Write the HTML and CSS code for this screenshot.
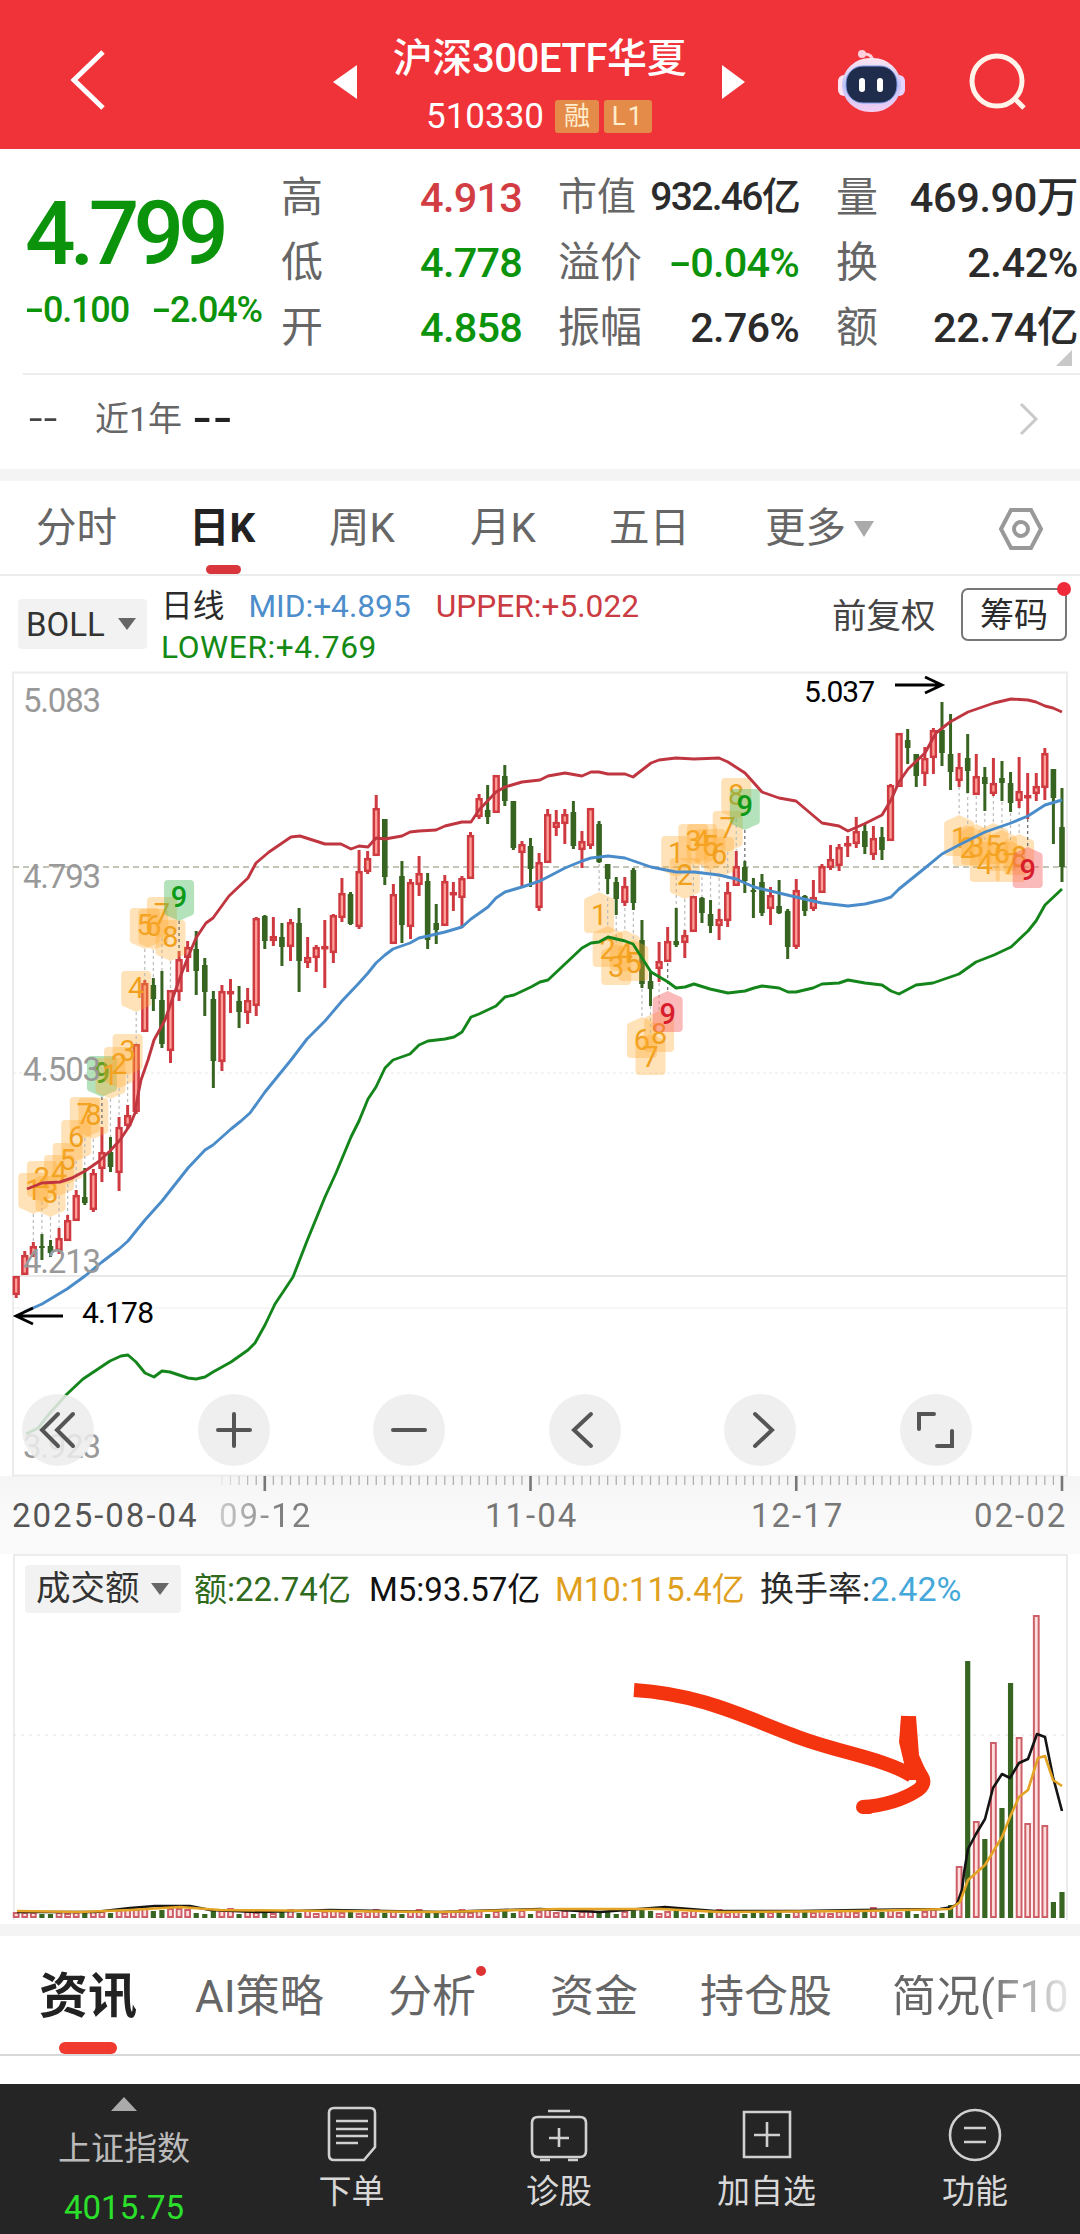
FILE: index.html
```html
<!DOCTYPE html>
<html lang="zh-CN">
<head>
  <meta charset="UTF-8">
  <meta name="viewport" content="width=device-width, initial-scale=1.0">
  <title>沪深300ETF华夏</title>
  <link rel="stylesheet" href="styles.css">
</head>
<body>
  <!-- Header -->
  <header class="header">
    <svg class="back" width="40" height="64" viewBox="0 0 40 64"><path d="M34 4 L5 32 L34 60"/></svg>
    <svg class="prev" width="26" height="36" viewBox="0 0 26 36"><path d="M25 1 V35 L1 18 Z"/></svg>
    <div class="title">
      <h1>沪深300ETF华夏</h1>
      <div class="code">
        <span class="code-num">510330</span>
        <span class="tag">融</span>
        <span class="tag tag-l1">L1</span>
      </div>
    </div>
    <svg class="next" width="26" height="36" viewBox="0 0 26 36"><path d="M1 1 V35 L24 18 Z"/></svg>
    <svg class="robot" width="70" height="66" viewBox="0 0 70 66">
      <defs>
        <linearGradient id="shell" x1="0" y1="0" x2="0" y2="1"><stop offset="0" stop-color="#ffe6f0"/><stop offset="0.5" stop-color="#c3c5f8"/><stop offset="1" stop-color="#f3cdf2"/></linearGradient>
      </defs>
      <path d="M36 14 Q35 6 25 7" fill="none" stroke="#ffd0dc" stroke-width="3"/>
      <circle cx="25" cy="7" r="4" fill="#ffd0dc"/>
      <rect x="1" y="28" width="12" height="21" rx="6" fill="#ffe3f1"/>
      <rect x="56" y="28" width="12" height="21" rx="6" fill="#e5d4ff"/>
      <rect x="5" y="11" width="59" height="54" rx="28" fill="url(#shell)"/>
      <rect x="9" y="19" width="51" height="37" rx="17" fill="#202c4b" stroke="#7d9bea" stroke-width="1"/>
      <rect x="22" y="31" width="6" height="14" rx="3" fill="#fff"/>
      <rect x="40" y="31" width="6" height="14" rx="3" fill="#fff"/>
    </svg>
    <svg class="search" width="60" height="60" viewBox="0 0 60 60"><circle cx="28" cy="29" r="25"/><path d="M45 46 L55 56"/></svg>
  </header>

  <!-- Quote -->
  <section class="quote">
    <div class="price down">
      <div class="last">4.799</div>
      <div class="change"><span><span class="minus">-</span>0.100</span><span><span class="minus">-</span>2.04%</span></div>
    </div>
    <dl class="col col-1">
      <dt>高</dt><dd class="up">4.913</dd>
      <dt>低</dt><dd class="down">4.778</dd>
      <dt>开</dt><dd class="down">4.858</dd>
    </dl>
    <dl class="col col-2">
      <dt class="narrow">市值</dt><dd class="narrow">932.46亿</dd>
      <dt>溢价</dt><dd class="down"><span class="minus">-</span>0.04%</dd>
      <dt>振幅</dt><dd>2.76%</dd>
    </dl>
    <dl class="col col-3">
      <dt>量</dt><dd>469.90万</dd>
      <dt>换</dt><dd>2.42%</dd>
      <dt>额</dt><dd>22.74亿</dd>
    </dl>
    <i class="corner"></i>
  </section>

  <section class="year">
    <span class="dash">--</span>
    <span class="year-label">近1年</span>
    <span class="dash dash-b">--</span>
    <svg width="20" height="34" viewBox="0 0 20 34"><path d="M2 2 L17 17 L2 32"/></svg>
  </section>

  <!-- Period tabs -->
  <nav class="periods">
    <span>分时</span>
    <span class="active">日K</span>
    <span>周K</span>
    <span>月K</span>
    <span>五日</span>
    <span class="more">更多<svg width="20" height="18" viewBox="0 0 20 18"><path d="M0 1 H20 L10 17 Z"/></svg></span>
    <svg class="settings" width="48" height="44" viewBox="0 0 48 44"><path d="M14 3 H34 L44 22 L34 41 H14 L4 22 Z"/><circle cx="24" cy="22" r="7"/></svg>
  </nav>

  <!-- Indicator row -->
  <section class="indicator">
    <div class="select">BOLL<i class="caret"></i></div>
    <div class="boll">
      <div><span class="day">日线</span><span class="mid">MID:+4.895</span><span class="upper">UPPER:+5.022</span></div>
      <div class="lower">LOWER:+4.769</div>
    </div>
    <span class="adjust">前复权</span>
    <span class="chips">筹码<i class="dot"></i></span>
  </section>

  <!-- Candle chart -->
  <section class="kline">
    <svg id="kline" width="1080" height="832" viewBox="0 660 1080 832"></svg>
    <div class="controls">
      <button><svg viewBox="0 0 72 72"><path d="M36 20 L20 36 L36 52 M51 20 L35 36 L51 52"/></svg></button>
      <button><svg viewBox="0 0 72 72"><path d="M36 20 V52 M20 36 H52"/></svg></button>
      <button><svg viewBox="0 0 72 72"><path d="M20 36 H52"/></svg></button>
      <button><svg viewBox="0 0 72 72"><path d="M42 20 L25 36 L42 52"/></svg></button>
      <button><svg viewBox="0 0 72 72"><path d="M31 20 L48 36 L31 52"/></svg></button>
      <button><svg viewBox="0 0 72 72"><path d="M34 20 H19 V35 M52 37 V52 H37"/></svg></button>
    </div>
    <div class="dates">
      <span class="first">2025-08-04</span>
      <span class="faded">09-12</span>
      <span>11-04</span>
      <span>12-17</span>
      <span>02-02</span>
    </div>
  </section>

  <!-- Turnover chart -->
  <section class="turnover">
    <div class="turnover-head">
      <div class="select">成交额<i class="caret"></i></div>
      <span class="amount">额:22.74亿</span>
      <span class="m5">M5:93.57亿</span>
      <span class="m10">M10:115.4亿</span>
      <span class="rate">换手率:<b>2.42%</b></span>
    </div>
    <svg id="volume" width="1080" height="306" viewBox="0 1614 1080 306"></svg>
  </section>

  <!-- Info tabs -->
  <nav class="info">
    <span class="active">资讯</span>
    <span>AI策略</span>
    <span>分析<i class="dot"></i></span>
    <span>资金</span>
    <span>持仓股</span>
    <span class="fade">简况(F10</span>
  </nav>

  <!-- Bottom bar -->
  <footer class="bottom">
    <div class="index">
      <i class="tri"></i>
      <span>上证指数</span>
      <b>4015.75</b>
    </div>
    <div class="item">
      <svg width="60" height="60" viewBox="0 0 60 60"><path d="M12 4 H48 Q53 4 53 9 V43 L42 56 H12 Q7 56 7 51 V9 Q7 4 12 4 Z M14 17 H46 M14 25 H46 M14 32 H46 M14 39 H36"/></svg>
      <span>下单</span>
    </div>
    <div class="item">
      <svg width="60" height="60" viewBox="0 0 60 60"><path d="M9 13 H51 Q57 13 57 19 V47 Q57 53 51 53 H9 Q3 53 3 47 V19 Q3 13 9 13 Z M19 7 H41 M11 56 H21 M39 56 H49 M30 24 V43 M20 34 H40"/></svg>
      <span>诊股</span>
    </div>
    <div class="item">
      <svg width="60" height="60" viewBox="0 0 60 60"><path d="M7 8 H53 V53 H7 Z M30 18 V43 M17 31 H43"/></svg>
      <span>加自选</span>
    </div>
    <div class="item">
      <svg width="60" height="60" viewBox="0 0 60 60"><circle cx="30" cy="31" r="25"/><path d="M19 24 H41 M19 38 H41"/></svg>
      <span>功能</span>
    </div>
  </footer>

  <script src="script.js"></script>
</body>
</html>
```
FILE: styles.css
```css
:root {
  --red: #f03239;
  --up: #d23c43;
  --down: #0b930b;
  --gray: #666;
  --line: #ececec;
}

* {
  box-sizing: border-box;
}

body {
  margin: 0;
  width: 1080px;
  height: 2234px;
  overflow: hidden;
  background: #fff;
  color: #2b2b2b;
  font-family: Roboto, "Noto Sans CJK SC", sans-serif;
  line-height: 1;
  white-space: nowrap;
}

i {
  display: block;
}

/* Header */
.header {
  display: flex;
  align-items: flex-start;
  height: 149px;
  background: var(--red);
  color: #fff;
}

.header path,
.header circle {
  fill: none;
}

.back {
  margin: 48px 0 0 69px;
  stroke: #fff;
  stroke-width: 5;
}

.header .prev path,
.header .next path {
  fill: #fff;
}

.prev {
  margin: 64px 0 0 223px;
}

.title {
  width: 363px;
  text-align: center;
}

.title h1 {
  margin: 39px 0 0;
  font-size: 40px;
  line-height: 40px;
  font-weight: 500;
  letter-spacing: -0.4px;
}

.code {
  display: flex;
  align-items: center;
  margin: 17px 0 0 68px;
  height: 40px;
  gap: 5px;
}

.code-num {
  width: 124px;
  text-align: left;
  font-size: 35px;
}

.tag {
  width: 44px;
  height: 33px;
  line-height: 33px;
  border-radius: 3px;
  background: #e58b49;
  color: #ffeccb;
  font-size: 26px;
}

.tag-l1 {
  width: 48px;
  letter-spacing: 2px;
}

.next {
  margin: 64px 0 0 0;
}

.robot {
  margin: 47px 0 0 90px;
}

.header .robot circle {
  fill: #ffd0dc;
}

.search {
  margin: 52px 0 0 62px;
  stroke: #fff3ea;
  stroke-width: 5;
}

/* Quote */
.quote {
  position: relative;
  display: flex;
  height: 226px;
}

.quote::after {
  content: "";
  position: absolute;
  left: 23px;
  right: 0;
  bottom: 0;
  height: 2px;
  background: var(--line);
}

.price {
  width: 281px;
  padding: 40px 0 0 25px;
}

.up {
  color: var(--up);
}

.down {
  color: var(--down);
}

.minus {
  display: inline-block;
  margin-right: 4px;
  transform: scaleX(1.6);
}

.last {
  font-size: 89px;
  font-weight: 500;
  letter-spacing: -5.8px;
}

.change {
  display: flex;
  gap: 26px;
  margin-top: 14px;
  padding-left: 3px;
  font-size: 36px;
  font-weight: 500;
  letter-spacing: -1.2px;
}

.col {
  display: grid;
  grid-template-columns: auto auto;
  grid-template-rows: repeat(3, 65px);
  align-items: center;
  justify-content: space-between;
  margin: 16px 0 0;
}

.col dt {
  color: var(--gray);
  font-size: 42px;
}

.col dd {
  margin: 0;
  font-size: 41.5px;
  font-weight: 500;
  letter-spacing: -0.8px;
  text-align: right;
}

.col dt.narrow {
  font-size: 39px;
}

.col dd.narrow {
  font-size: 39px;
  letter-spacing: -1.7px;
}

.col-1 {
  width: 241px;
}

.col-2 {
  width: 241px;
  margin-left: 36px;
}

.col-3 {
  width: 242px;
  margin-left: 37px;
}

.col-3 dd {
  letter-spacing: -0.4px;
}

.corner {
  position: absolute;
  right: 8px;
  bottom: 9px;
  border-left: 16px solid transparent;
  border-bottom: 16px solid #c8c8c8;
}

.year {
  display: flex;
  align-items: center;
  height: 106px;
  padding: 0 41px 6px 29px;
  border-bottom: 12px solid #f4f4f4;
  font-size: 32px;
  color: var(--gray);
}

.dash {
  width: 31px;
  font-size: 36px;
  letter-spacing: 1px;
  color: #444;
  transform: scaleX(1.35);
  transform-origin: left;
}

.year-label {
  margin: 0 10px 0 35px;
  font-size: 34px;
}

.dash-b {
  color: #222;
  font-weight: 700;
  letter-spacing: 0;
  transform: scaleX(1.45);
}

.year svg {
  margin-left: auto;
  fill: none;
  stroke: #c9c9c9;
  stroke-width: 3;
}

/* Period tabs */
.periods {
  display: grid;
  grid-template-columns: 153px 140px 141px 139px 156px 232px 48px;
  align-items: center;
  height: 95px;
  padding: 2px 0 0 36px;
  border-bottom: 2px solid var(--line);
  color: var(--gray);
  font-size: 40.5px;
}

.periods .active {
  position: relative;
  color: #222;
  font-weight: 700;
}

.periods .active::after {
  content: "";
  position: absolute;
  left: 17px;
  top: 57px;
  width: 35px;
  height: 9px;
  border-radius: 5px;
  background: #d8363c;
}

.more {
  display: flex;
  align-items: center;
  gap: 8px;
}

.more svg {
  fill: #aaa;
}

.settings {
  fill: none;
  stroke: #999;
  stroke-width: 4;
}

/* Indicator row */
.indicator {
  display: flex;
  height: 84px;
  padding: 10px 12px 0 18px;
}

.select {
  display: flex;
  align-items: center;
  justify-content: space-between;
  width: 129px;
  height: 50px;
  margin-top: 13px;
  padding: 0 11px 0 8px;
  border-radius: 4px;
  background: #f2f2f2;
  color: #333;
  font-size: 33px;
}

.caret {
  border: 9px solid transparent;
  border-top: 12px solid #666;
  border-bottom: 0;
}

.boll {
  width: 670px;
  padding-left: 14px;
  font-size: 31.7px;
  line-height: 41px;
}

.boll .mid {
  margin: 0 25px 0 24px;
  color: #4d8dcb;
}

.boll .upper {
  color: #cb3b42;
}

.boll .lower {
  color: #148a14;
  letter-spacing: 0.6px;
}

.adjust {
  width: 144px;
  margin-top: 3px;
  padding-left: 15px;
  font-size: 34.5px;
  line-height: 54px;
  color: #444;
}

.chips {
  position: relative;
  width: 106px;
  height: 53px;
  margin-top: 2px;
  border: 2px solid #777;
  border-radius: 7px;
  font-size: 34px;
  line-height: 50px;
  text-align: center;
}

.chips .dot {
  position: absolute;
  top: -8px;
  right: -6px;
  width: 14px;
  height: 14px;
  border-radius: 50%;
  background: #ef2b3b;
}

/* Candle chart */
.kline {
  position: relative;
  height: 894px;
  background: linear-gradient(#fff 816px, #f5f5f5 816px, #f9f9f9 850px, #fafafa);
}

.kline > svg,
.turnover > svg {
  display: block;
}

#kline text {
  font-size: 33px;
}

.controls {
  position: absolute;
  left: 22px;
  top: 734px;
  display: flex;
  gap: 103.6px;
}

.controls button {
  width: 72px;
  height: 72px;
  padding: 0;
  border: 0;
  border-radius: 50%;
  background: rgba(236, 236, 236, 0.86);
}

.controls svg {
  display: block;
  fill: none;
  stroke: #555;
  stroke-width: 4;
  stroke-linecap: round;
}

.dates {
  display: grid;
  grid-template-columns: 207px 266px 266px 223px auto;
  padding: 7px 0 0 12px;
  font-size: 33px;
  letter-spacing: 2px;
  color: #777;
}

.dates .first {
  color: #555;
}

.dates .faded {
  color: transparent;
  background: linear-gradient(90deg, #ccc, #808080 60px);
  background-clip: text;
}

/* Turnover chart */
.turnover {
  height: 370px;
}

.turnover-head {
  display: flex;
  align-items: center;
  height: 60px;
  margin: 0 12px 0 13px;
  padding-left: 10px;
  border: 2px solid var(--line);
  border-bottom: 0;
  font-size: 33px;
}

.turnover-head .select {
  width: 156px;
  height: 48px;
  margin: 7px 13px 0 0;
  padding: 0 12px 0 11px;
  font-size: 34.5px;
}

.turnover-head span {
  margin-top: 8px;
}

.amount {
  width: 175px;
  color: #2f6a1d;
}

.m5 {
  width: 186px;
  color: #111;
}

.m10 {
  width: 205px;
  color: #dfa01e;
}

.rate {
  font-size: 34px;
}

.rate b {
  font-weight: 400;
  color: #45a8da;
}

/* Info tabs */
.info {
  display: grid;
  grid-template-columns: 156px 193px 162px 150px 192px auto;
  align-items: center;
  height: 132px;
  padding: 3px 0 0 39px;
  border-top: 12px solid #f4f4f4;
  border-bottom: 2px solid #d8d8d8;
  color: var(--gray);
  font-size: 44px;
}

.info span {
  position: relative;
}

.info .active {
  color: #222;
  font-size: 49px;
  font-weight: 700;
}

.info .active::after {
  content: "";
  position: absolute;
  left: 20px;
  top: 70px;
  width: 58px;
  height: 12px;
  border-radius: 6px;
  background: #f0392f;
}

.info .dot {
  position: absolute;
  left: 88px;
  top: -9px;
  width: 10px;
  height: 10px;
  border-radius: 50%;
  background: #d33;
}

.info .fade {
  width: 190px;
  color: transparent;
  background: linear-gradient(90deg, #666 90px, #eee 180px);
  background-clip: text;
}

/* Bottom bar */
.bottom {
  display: grid;
  grid-template-columns: 248px 207px 208px 207px 210px;
  height: 150px;
  margin-top: 28px;
  background: #252525;
  color: #d8d8d8;
}

.index,
.item {
  display: flex;
  flex-direction: column;
  align-items: center;
  font-size: 33px;
}

.tri {
  margin: 13px 0 21px;
  border: 13px solid transparent;
  border-bottom: 14px solid #aaa;
  border-top: 0;
}

.index span {
  color: #bbb;
}

.index b {
  margin-top: 26px;
  font-size: 33px;
  font-weight: 400;
  color: #2be02b;
}

.item {
  padding-top: 20px;
}

.item svg {
  fill: none;
  stroke: #d0d0d0;
  stroke-width: 2.6;
}

.item span {
  margin-top: 11px;
}
```
FILE: script.js
```js
// [direction, high, body top, body bottom, low]
const candles = [
  ['r',1276,1276,1295,1298],['r',1251,1255,1275,1275],['r',1242,1246,1255,1257],['g',1234,1246,1247,1260],['g',1240,1246,1253,1257],
  ['r',1228,1238,1251,1254],['r',1215,1220,1241,1241],['r',1190,1195,1221,1221],['g',1168,1197,1203,1205],['r',1169,1173,1210,1212],
  ['r',1127,1152,1169,1182],['g',1137,1152,1167,1172],['r',1117,1127,1173,1191],['r',1105,1115,1126,1129],['r',1044,1044,1112,1114],
  ['r',980,983,1032,1032],['g',978,985,999,1011],['g',971,1000,1044,1048],['r',990,990,1051,1063],['r',951,959,992,1001],
  ['r',941,947,958,972],['g',931,949,971,995],['g',958,965,992,1016],['g',991,999,1061,1088],['r',985,991,1062,1071],
  ['r',979,991,992,1013],['g',986,1001,1012,1028],['r',988,1000,1013,1024],['r',917,918,1006,1016],['g',915,916,941,949],
  ['r',917,936,941,946],['g',923,937,947,966],['r',919,922,947,961],['g',908,923,961,992],['r',937,957,963,968],
  ['r',945,947,958,972],['r',920,946,947,988],['r',914,915,953,963],['r',878,893,918,922],['g',892,894,924,925],
  ['r',850,871,927,929],['r',851,858,872,874],['r',795,808,856,856],['g',819,819,877,885],['r',884,894,944,944],
  ['g',861,876,925,943],['r',879,882,927,939],['r',856,873,885,896],['g',873,881,940,949],['g',904,923,930,944],
  ['r',875,881,926,926],['r',882,892,893,911],['r',876,878,898,928],['r',832,835,879,879],['r',794,798,817,819],
  ['g',785,810,817,824],['r',775,775,813,813],['g',765,776,801,806],['g',801,801,848,850],['r',841,844,853,886],
  ['g',838,846,869,887],['r',853,862,908,911],['r',809,814,863,863],['r',810,822,828,836],['r',809,814,824,844],
  ['g',801,812,846,849],['r',831,841,850,868],['r',808,808,846,849],['g',821,824,862,863],['g',864,864,879,894],
  ['g',877,882,899,915],['r',877,886,903,906],['g',868,870,903,910],['g',920,940,984,988],['g',972,981,989,1006],
  ['r',942,961,969,982],['r',927,941,962,962],['g',908,941,945,947],['r',930,935,943,958],['r',896,896,932,932],
  ['g',897,898,913,923],['g',900,914,926,933],['r',909,919,926,940],['r',882,892,921,927],['r',851,866,886,886],
  ['g',861,867,881,893],['g',878,890,891,918],['g',874,882,913,916],['r',887,895,909,925],['g',880,906,913,914],
  ['g',909,911,947,959],['r',879,890,947,949],['g',895,896,911,916],['r',880,897,909,911],['r',864,866,893,893],
  ['r',845,859,868,870],['r',844,847,866,871],['r',836,843,844,857],['r',817,831,844,848],['g',823,831,847,854],
  ['r',826,838,855,860],['g',827,837,850,860],['r',784,785,841,841],['r',733,733,787,787],['g',729,740,748,764],
  ['g',754,754,776,787],['r',747,758,774,786],['r',728,730,758,774],['g',702,730,753,766],['g',714,754,772,790],
  ['r',753,767,781,787],['g',734,758,771,793],['r',754,776,795,795],['g',767,777,784,811],['r',758,783,794,796],
  ['g',761,778,783,801],['g',772,783,803,812],['r',757,791,801,808],['r',773,795,797,819],['r',773,786,794,801],
  ['r',748,753,788,800],['g',769,769,798,844],['g',788,827,867,882]
];

const upper = '27,1189 42,1183 60,1182 72,1178 85,1171 98,1162 110,1151 120,1140 130,1125 135,1113 137,1100 141,1080 148,1060 154,1040 165,1020 172,1000 181,975 188,957 196,938 206,923 213,918 229,896 248,878 256,863 269,852 291,837 300,836 325,844 341,844 351,849 359,846 368,847 376,838 385,839 402,836 410,832 419,831 436,830 445,826 462,822 471,822 479,810 496,792 505,787 522,782 540,780 548,776 565,773 582,776 591,772 599,772 608,774 625,774 633,777 651,763 659,760 676,758 694,759 719,758 728,762 745,773 754,783 762,792 779,798 796,801 822,823 839,826 848,831 864,824 882,815 891,800 899,782 908,769 925,753 936,733 950,722 968,712 994,703 1011,699 1028,700 1036,702 1045,706 1053,708 1062,712';
const mid = '24,1312 42,1304 67,1289 85,1276 102,1262 119,1249 128,1241 136,1231 145,1220 162,1201 188,1168 205,1150 213,1145 231,1129 241,1121 250,1113 265,1092 291,1060 307,1039 325,1021 342,1001 359,983 368,973 376,963 385,955 393,949 410,943 419,938 428,936 445,932 462,927 471,919 488,907 496,898 505,892 522,887 540,881 565,868 582,861 591,858 608,856 625,858 651,867 676,872 694,872 719,875 736,879 754,887 779,893 804,899 822,903 848,906 865,904 882,900 891,897 899,889 925,868 942,854 959,845 985,832 1011,823 1028,816 1045,805 1062,800';
const lower = '26,1434 38,1428 50,1413 67,1394 83,1379 110,1361 121,1356 128,1355 136,1362 145,1373 154,1377 162,1371 170,1372 188,1378 196,1379 205,1377 213,1372 231,1362 248,1350 255,1343 265,1325 275,1304 293,1277 307,1241 325,1197 336,1173 351,1137 359,1121 368,1099 376,1087 385,1068 393,1060 410,1054 419,1045 428,1041 445,1039 454,1037 462,1032 471,1017 479,1014 496,1006 505,997 514,995 531,987 540,982 548,980 565,964 582,948 591,943 599,942 608,937 625,941 633,944 642,958 651,972 668,982 676,988 685,987 694,984 710,989 728,993 745,991 754,988 762,986 779,988 788,992 796,992 813,988 822,984 839,983 848,980 865,983 882,985 891,991 899,994 916,985 933,983 959,974 976,962 994,955 1011,947 1028,931 1036,921 1045,905 1062,889';

// TD sequence: [first candle, side, centre of each badge 1..9]
const sequences = [
  [2, 'top', [1190,1178,1193,1172,1160,1137,1114,1115,1073]],
  [11, 'top', [1075,1064,1051,988,925,926,914,937,897]],
  [68, 'bottom', [915,949,967,953,963,1040,1057,1034,1014]],
  [77, 'top', [853,875,841,841,846,854,828,795,806]],
  [110, 'bottom', [838,848,847,864,846,853,864,857,870]]
];

const x = i => 16.2 + i * 8.572;
const line = (x1, y1, x2, y2, color, width = 1, extra = '') =>
  `<line x1="${x1}" y1="${y1}" x2="${x2}" y2="${y2}" stroke="${color}" stroke-width="${width}" ${extra}/>`;
const poly = (points, color, width = 2.9) =>
  `<polyline points="${points}" fill="none" stroke="${color}" stroke-width="${width}" stroke-linejoin="round"/>`;
const label = (text, tx, ty, w, color, size = 33) =>
  `<text x="${tx}" y="${ty}" textLength="${w}" fill="${color}" style="font-size:${size}px">${text}</text>`;

function drawKline() {
  let s = '<rect x="13" y="672.5" width="1054" height="803" fill="none" stroke="#ececec" stroke-width="2"/>';
  s += line(13, 1073, 1067, 1073, '#e8e8e8', 1, 'stroke-dasharray="3 3"');
  s += line(13, 1276, 1067, 1276, '#e2e2e2', 1.5);
  s += line(13, 1308, 1067, 1308, '#eee', 1);
  s += line(13, 867, 1067, 867, '#b0b3a0', 1.3, 'stroke-dasharray="6 4"');

  candles.forEach(([dir, hi, top, bot, lo], i) => {
    const c = dir === 'r' ? '#cf3a41' : '#376420';
    s += line(x(i), hi, x(i), dir === 'r' ? top : bot, c, 3);
    s += line(x(i), dir === 'r' ? bot : top, x(i), lo, c, 3);
    s += dir === 'r'
      ? `<rect x="${x(i) - 2.4}" y="${top + 1.2}" width="4.8" height="${Math.max(bot - top - 2.4, 1)}" fill="#ff9f97" stroke="${c}" stroke-width="2.5"/>`
      : `<rect x="${x(i) - 2.8}" y="${top}" width="5.6" height="${Math.max(bot - top, 2)}" fill="${c}"/>`;
  });

  sequences.forEach(([start, side, ys]) => {
    ys.forEach((cy, k) => {
      const cx = x(start + k);
      const [, hi, , , lo] = candles[start + k];
      const last = k === 8;
      const bg = !last ? '#ffab2e' : side === 'top' ? '#4cbb5c' : '#f55a5a';
      const fg = !last ? '#f0a01c' : side === 'top' ? '#0c9a17' : '#d81e2c';
      s += line(cx, cy + (side === 'top' ? 24 : -24), cx, side === 'top' ? hi : lo, last ? '#666' : '#bbb', 1.2, 'stroke-dasharray="3 3"');
      const p = side === 'top'
        ? `M${cx - 11} ${cy - 17} h22 q4 0 4 4 v28 q0 3 -4 4 l-11 5 l-11 -5 q-4 -1 -4 -4 v-28 q0 -4 4 -4 Z`
        : `M${cx - 11} ${cy + 18} h22 q4 0 4 -4 v-28 q0 -3 -4 -4 l-11 -5 l-11 5 q-4 1 -4 4 v28 q0 4 4 4 Z`;
      s += `<path d="${p}" fill="${bg}" opacity="${last ? 0.42 : 0.34}"/>`;
      s += `<text x="${cx}" y="${cy + 10}" text-anchor="middle" fill="${fg}" style="font-size:29px;font-weight:${last ? 500 : 400}">${k + 1}</text>`;
    });
  });

  s += poly(lower, '#14851b') + poly(mid, '#4a8bc9') + poly(upper, '#c03640');

  [['5.083', 712], ['4.793', 888], ['4.503', 1081], ['4.213', 1273], ['3.923', 1458]].forEach(([t, y]) => {
    s += label(t, 23, y, 78, '#999');
  });
  s += label('5.037', 804, 702, 71, '#000', 30);
  s += label('4.178', 82, 1323, 72, '#000', 30);
  s += '<path d="M895 685 H941 M925 677 L942 685 L925 693 M63 1316 H17 M33 1308 L16 1316 L33 1324" fill="none" stroke="#000" stroke-width="2.8"/>';

  // time axis ticks
  for (let i = 24; i < 123; i++) {
    const major = i % 31 === 29;
    s += line(x(i), 1476, x(i), major ? 1491 : 1485, major ? '#777' : '#aaa', major ? 2.6 : 1.2, `opacity="${Math.min(1, (i - 23) / 5)}"`);
  }
  document.getElementById('kline').innerHTML = s;
}

function drawVolume() {
  const big = { 109: 1905, 110: 1867, 111: 1661, 112: 1822, 113: 1839, 114: 1743, 115: 1808, 116: 1683, 117: 1738, 118: 1824, 119: 1616, 120: 1826, 121: 1902, 122: 1892 };
  const small = [5, 5, 5, 4, 4, 5, 4, 5, 5, 6, 6, 5, 7, 8, 8, 10, 7, 8, 9, 9, 8, 5, 4, 7, 7, 9, 4, 6];
  let s = '<path d="M14 1614 V1920 M1067 1614 V1920" stroke="#ececec" stroke-width="2"/>';
  s += line(13, 1735, 1067, 1735, '#e2e2e2', 1, 'stroke-dasharray="3 5"');
  candles.forEach(([dir], i) => {
    let top = big[i];
    if (!top) top = 1918 - (i < 28 ? small[i] : 4 + (i * 7 % 5));
    if (i === 73 || i === 100) top = 1908;
    s += dir === 'r'
      ? `<rect x="${x(i) - 2.4}" y="${top}" width="4.8" height="${1917 - top}" fill="#ffdfde" stroke="#cc5f68" stroke-width="2"/>`
      : `<rect x="${x(i) - 2.6}" y="${top}" width="5.2" height="${1918 - top}" fill="#386622"/>`;
  });
  s += poly('17,1912 95,1912 130,1908 155,1906 190,1906 210,1910 260,1912 330,1910 440,1912 540,1909 600,1912 665,1907 715,1911 800,1911 860,1910 940,1909 952,1907 957,1904 962,1890 964,1873 968,1849 976,1834 985,1819 993,1788 1002,1774 1010,1778 1019,1763 1028,1759 1037,1734 1045,1737 1053,1777 1062,1811', '#141414', 2.6);
  s += poly('17,1911 80,1912 130,1910 180,1907 220,1910 330,1911 440,1912 560,1909 660,1909 720,1912 860,1911 950,1909 960,1902 968,1880 985,1865 1002,1837 1010,1817 1019,1797 1028,1790 1038,1758 1045,1756 1053,1780 1062,1786', '#e3a324', 2.6);
  // hand-drawn arrow
  s += `<g fill="none" stroke="#f4330f" stroke-linejoin="round">
    <path d="M634 1690 C700 1694 745 1717 790 1734 C830 1751 885 1758 912 1776" stroke-width="14"/>
    <path d="M908 1716 L907 1742 Q911 1761 922 1777 Q926 1784 918 1790 Q895 1805 862 1807" stroke-width="14"/>
    <path d="M901 1718 L916 1716 L919 1755 L930 1780 L908 1780 L899 1742 Z" fill="#f4330f" stroke="none"/>
    <path d="M863 1807 h6" stroke-width="14" stroke-linecap="round"/>
  </g>`;
  document.getElementById('volume').innerHTML = s;
}

drawKline();
drawVolume();
```
